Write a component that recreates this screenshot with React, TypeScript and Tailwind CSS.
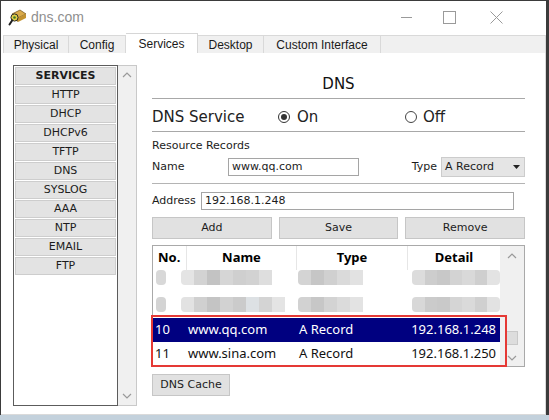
import React from "react"

const tabs = [
    { label: "Physical", w: "w-[66px]", active: false },
    { label: "Config", w: "w-[57px]", active: false },
    { label: "Services", w: "w-[72px]", active: true },
    { label: "Desktop", w: "w-[66px]", active: false },
    { label: "Custom Interface", w: "w-[117px]", active: false },
]

const services = ["HTTP", "DHCP", "DHCPv6", "TFTP", "DNS", "SYSLOG", "AAA", "NTP", "EMAIL", "FTP"]

// mosaic squares for the pixelated (hidden) rows
const row1 = {
    no: ["bg-[#d8d8d8]"],
    name: ["bg-[#e4e4e4]", "bg-[#d3d3d3]", "bg-[#c3c3c3]", "bg-[#d6d6d6]", "bg-[#cfcfcf]", "bg-[#d2d2d2]", "bg-[#dedede]"],
    type: ["bg-[#d4d4d4]", "bg-[#c6c6c6]", "bg-[#d0d0d0]", "bg-[#dadada]", "bg-[#e2e2e2]"],
    detail: ["bg-[#dcdcdc]", "bg-[#cdcdcd]", "bg-[#c8c8c8]", "bg-[#d3d3d3]", "bg-[#d9d9d9]", "bg-[#cfcfcf]", "bg-[#e3e3e3]"],
}
const row2 = {
    no: ["bg-[#d4d4d4]"],
    name: ["bg-[#e2e2e2]", "bg-[#d0d0d0]", "bg-[#c4c4c4]", "bg-[#d2d2d2]", "bg-[#cbcbcb]", "bg-[#dde1e4]", "bg-[#d4d4d4]", "bg-[#e4e4e4]"],
    type: ["bg-[#d2d2d2]", "bg-[#c7c7c7]", "bg-[#d3d3d3]", "bg-[#dbdbdb]", "bg-[#e3e3e3]"],
    detail: ["bg-[#d8d8d8]", "bg-[#cbcbcb]", "bg-[#c9c9c9]", "bg-[#d5d5d5]", "bg-[#dadada]", "bg-[#d0d0d0]", "bg-[#e2e2e2]"],
}

const Mosaic = ({ cells }: { cells: string[] }) => (
    <div className="flex h-[15px] rounded-[4px] overflow-hidden">
        {cells.map((c, i) => (
            <div key={i} className={c + " w-[13px] h-full"} />
        ))}
    </div>
)

const ChevUp = () => (
    <svg width="10" height="6" viewBox="0 0 10 6">
        <polyline points="1,5 5,1 9,5" fill="none" stroke="#9a9a9a" strokeWidth="1.2" />
    </svg>
)
const ChevDown = () => (
    <svg width="10" height="6" viewBox="0 0 10 6">
        <polyline points="1,1 5,5 9,1" fill="none" stroke="#9a9a9a" strokeWidth="1.2" />
    </svg>
)

const records = [
    { no: "10", name: "www.qq.com", type: "A Record", detail: "192.168.1.248", selected: true },
    { no: "11", name: "www.sina.com", type: "A Record", detail: "192.168.1.250", selected: false },
]

export default function App() {
    return (
        <div className="w-[549px] h-[420px] flex flex-col bg-[#c3d1dc] overflow-hidden">
            <div className="h-[415px] flex flex-col bg-white border-t border-l border-r-[3px] border-[#3b3b3b]">
                {/* title bar */}
                <div className="h-[32px] flex items-center pl-[7px] shrink-0">
                    <svg width="19" height="19" viewBox="0 0 19 19">
                        <polygon points="4,6 12,2 18,6 10,10" fill="#d9aa4a" stroke="#7a5a22" strokeWidth="0.8" />
                        <polygon points="4,6 10,10 10,14 4,10" fill="#9c7428" />
                        <polygon points="10,10 18,6 18,10 10,14" fill="#c3922f" />
                        <circle cx="6.5" cy="9.5" r="3.6" fill="#e2cf48" stroke="#2a2a2a" strokeWidth="1" />
                        <circle cx="6.5" cy="9.5" r="1.3" fill="#3d7a2a" />
                        <line x1="4.3" y1="12.3" x2="1.5" y2="16.5" stroke="#1e1e1e" strokeWidth="2" strokeLinecap="round" />
                    </svg>
                    <span className="ml-[4px] text-[14px] text-[#8f8f8f] font-['Liberation_Sans',sans-serif]">dns.com</span>
                    <div className="ml-auto flex items-center mr-[43px]">
                        <svg width="11" height="13" viewBox="0 0 11 13">
                            <line x1="0" y1="6.5" x2="11" y2="6.5" stroke="#9a9a9a" strokeWidth="1" />
                        </svg>
                        <svg width="13" height="13" viewBox="0 0 13 13" className="ml-[31px]">
                            <rect x="0.5" y="0.5" width="12" height="12" fill="none" stroke="#9a9a9a" strokeWidth="1" />
                        </svg>
                        <svg width="13" height="13" viewBox="0 0 13 13" className="ml-[34px]">
                            <path d="M0.5 0.5 L12.5 12.5 M12.5 0.5 L0.5 12.5" stroke="#9a9a9a" strokeWidth="1" />
                        </svg>
                    </div>
                </div>

                {/* tabs */}
                <div className="h-[20px] flex items-end pl-[2px] shrink-0 font-['Liberation_Sans',sans-serif] text-[12px] text-[#1a1a1a]">
                    {tabs.map((t, i) => (
                        <div
                            key={t.label}
                            className={
                                t.w +
                                (t.active
                                    ? " h-[20px] bg-white border-t border-r border-[#d6d6d6]"
                                    : " h-[18px] bg-[#f0f0f0] border-t border-r border-[#d9d9d9]") +
                                (i === 0 ? " border-l" : "") +
                                " flex items-center justify-center"
                            }
                        >
                            {t.label}
                        </div>
                    ))}
                    <div className="flex-1 h-[18px] bg-[#f0f0f0] border-t border-r border-[#d9d9d9]" />
                </div>

                {/* content */}
                <div className="flex-1 flex pl-[12px] pt-[12px] border-r border-b border-[#dadada] font-['DejaVu_Sans',sans-serif] text-[#1c1c1c]">
                    {/* services list */}
                    <div className="flex h-[341px]">
                        <div className="w-[105px] border border-[#5c5c5c] bg-white pt-[1px] px-[1px] flex flex-col gap-[1px]">
                            <div className="h-[18px] bg-[#e3e3e3] border border-[#cdcdcd] flex items-center justify-center text-[11px] font-bold">
                                SERVICES
                            </div>
                            {services.map(s => (
                                <div key={s} className="h-[18px] bg-[#e3e3e3] border border-[#cdcdcd] flex items-center justify-center text-[11px]">
                                    {s}
                                </div>
                            ))}
                        </div>
                        <div className="w-[19px] bg-[#f0f0f0] border-t border-r border-b border-[#c9c9c9] flex flex-col items-center justify-between py-[6px]">
                            <ChevUp />
                            <ChevDown />
                        </div>
                    </div>

                    {/* DNS panel */}
                    <div className="w-[373px] ml-[15px] flex flex-col">
                        <div className="mt-[9px] h-[20px] flex items-center justify-center text-[15px] text-[#111]">DNS</div>
                        <div className="mt-[4px] h-px bg-[#a8a8a8]" />

                        <div className="mt-[7px] h-[22px] flex items-center text-[15px] text-[#222]">
                            <span className="w-[126px]">DNS Service</span>
                            <div className="w-[127px] flex items-center">
                                <div className="w-[12px] h-[12px] rounded-full border border-[#333] flex items-center justify-center">
                                    <div className="w-[6px] h-[6px] rounded-full bg-[#333]" />
                                </div>
                                <span className="ml-[7px]">On</span>
                            </div>
                            <div className="flex items-center">
                                <div className="w-[12px] h-[12px] rounded-full border border-[#444]" />
                                <span className="ml-[6px]">Off</span>
                            </div>
                        </div>
                        <div className="mt-[3px] h-px bg-[#a8a8a8]" />

                        <div className="mt-[7px] h-[14px] leading-[14px] text-[11px]">Resource Records</div>

                        <div className="mt-[4px] h-[20px] flex items-center text-[11px]">
                            <span className="w-[76px]">Name</span>
                            <div className="w-[131px] h-[18px] border border-[#a5a5a5] flex items-center px-[3px]">www.qq.com</div>
                            <span className="ml-auto mr-[4px]">Type</span>
                            <div className="w-[84px] h-[20px] bg-[#e5e5e5] border border-[#cccccc] flex items-center pl-[3px] pr-[4px]">
                                <span>A Record</span>
                                <svg width="7" height="4" viewBox="0 0 7 4" className="ml-auto">
                                    <polygon points="0,0 7,0 3.5,4" fill="#222" />
                                </svg>
                            </div>
                        </div>
                        <div className="mt-[6px] h-px bg-[#b4b4b4]" />

                        <div className="mt-[7px] h-[20px] flex items-center text-[11px]">
                            <span className="w-[49px]">Address</span>
                            <div className="w-[313px] h-[18px] border border-[#a5a5a5] flex items-center px-[3px]">192.168.1.248</div>
                        </div>

                        <div className="mt-[6px] h-[22px] grid grid-cols-3 gap-[7px] text-[11px]">
                            <div className="bg-[#e1e1e1] border border-[#c6c6c6] flex items-center justify-center">Add</div>
                            <div className="bg-[#e1e1e1] border border-[#c6c6c6] flex items-center justify-center">Save</div>
                            <div className="bg-[#e1e1e1] border border-[#c6c6c6] flex items-center justify-center">Remove</div>
                        </div>

                        {/* records table */}
                        <div className="mt-[6px] h-[122px] border border-[#a9a9a9] flex relative font-['Noto_Sans',sans-serif] text-[13px] text-black">
                            <div className="w-[347px] flex flex-col bg-white">
                                <div className="h-[24px] flex items-center font-bold">
                                    <div className="w-[33px] pl-[5px]">No.</div>
                                    <div className="w-[110px] h-full border-l border-[#e6e6e6] flex items-center justify-center">Name</div>
                                    <div className="w-[111px] h-full border-l border-[#e6e6e6] flex items-center justify-center">Type</div>
                                    <div className="w-[93px] h-full border-l border-[#e6e6e6] flex items-center justify-center">Detail</div>
                                </div>
                                <div className="h-[48px] flex flex-col gap-[12px]">
                                    {[row1, row2].map((r, i) => (
                                        <div key={i} className="flex">
                                            <div className="w-[28px] pl-[3px]">
                                                <div className="w-[10px]">
                                                    <Mosaic cells={r.no} />
                                                </div>
                                            </div>
                                            <div className="w-[115px]">
                                                <Mosaic cells={r.name} />
                                            </div>
                                            <div className="w-[111px] pl-[2px]">
                                                <Mosaic cells={r.type} />
                                            </div>
                                            <div className="w-[93px] pl-[5px]">
                                                <Mosaic cells={r.detail} />
                                            </div>
                                        </div>
                                    ))}
                                </div>
                                {records.map(r => (
                                    <div
                                        key={r.no}
                                        className={
                                            "h-[24px] flex items-center " +
                                            (r.selected ? "bg-[#000080] text-white" : "text-[#111]")
                                        }
                                    >
                                        <div className="w-[33px] pl-[2px]">{r.no}</div>
                                        <div className="w-[110px] pl-[2px]">{r.name}</div>
                                        <div className="w-[111px] pl-[3px]">{r.type}</div>
                                        <div className="w-[93px] pr-[4px] text-right">{r.detail}</div>
                                    </div>
                                ))}
                            </div>
                            <div className="flex-1 bg-[#f0f0f0] flex flex-col items-center">
                                <div className="mt-[7px]">
                                    <ChevUp />
                                </div>
                                <div className="mt-[72px] w-[12px] h-[14px] bg-[#dddddd] border border-[#c9c9c9]" />
                                <div className="mt-[10px]">
                                    <ChevDown />
                                </div>
                            </div>
                            {/* highlight frame */}
                            <div className="absolute left-[-2px] top-[69px] w-[356px] h-[52px] border-2 border-[#e53935]" />
                        </div>

                        <div className="mt-[7px] w-[78px] h-[22px] bg-[#e1e1e1] border border-[#c6c6c6] flex items-center justify-center text-[11px]">
                            DNS Cache
                        </div>
                    </div>
                </div>
            </div>
        </div>
    )
}
